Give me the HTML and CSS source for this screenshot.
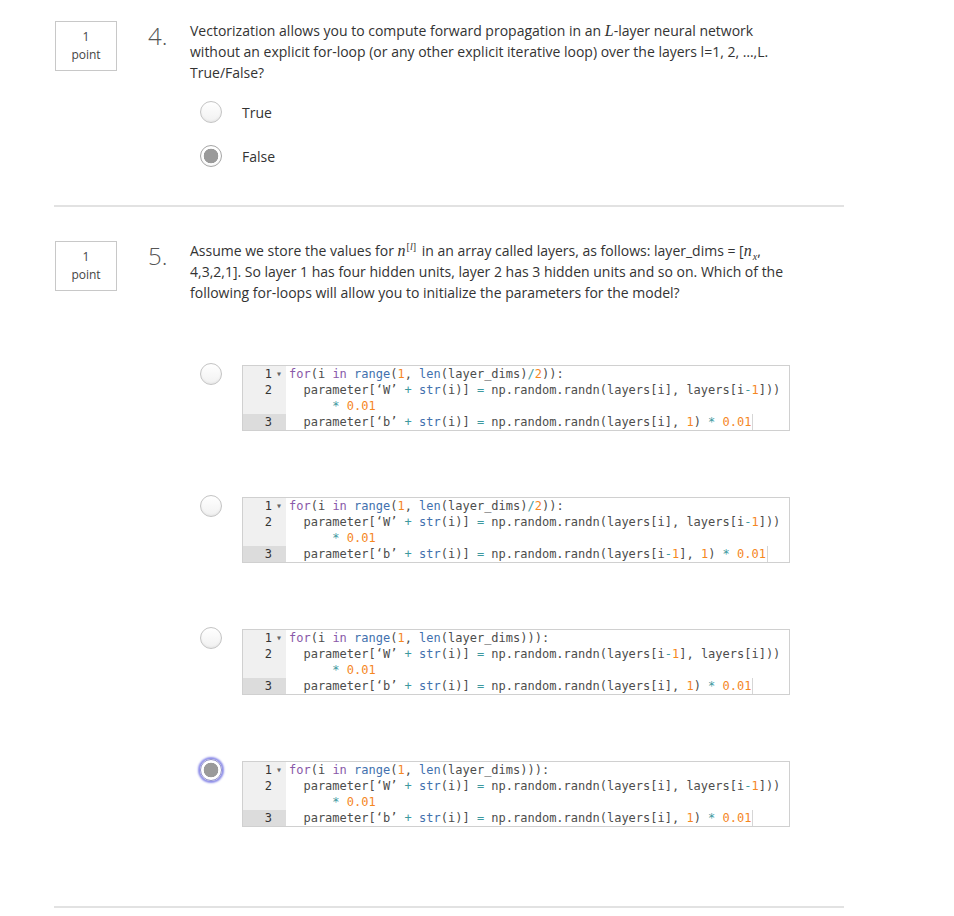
FILE: index.html
```html
<!DOCTYPE html>
<html>
<head>
<meta charset="utf-8">
<link rel="stylesheet" href="styles.css">
</head>
<body>
<div class="page">
  <section class="question q4">
    <div class="points"><div>1</div><div>point</div></div>
    <div class="qnum">4.</div>
    <div class="qbody">
      <div class="prompt">Vectorization allows you to compute forward propagation in an <span class="math">L</span>-layer neural network without an explicit for-loop (or any other explicit iterative loop) over the layers l=1, 2, …,L. True/False?</div>
      <div class="text-options">
        <div class="opt"><span class="radio"></span><span class="opt-label">True</span></div>
        <div class="opt"><span class="radio checked"></span><span class="opt-label">False</span></div>
      </div>
    </div>
  </section>
  <div class="sep"></div>
  <section class="question q5">
    <div class="points"><div>1</div><div>point</div></div>
    <div class="qnum">5.</div>
    <div class="qbody">
      <div class="prompt">Assume we store the values for <span class="math">n<sup>[<i>l</i>]</sup></span> in an array called layers, as follows: layer_dims = [<span class="math">n<sub>x</sub></span>, 4,3,2,1]. So layer 1 has four hidden units, layer 2 has 3 hidden units and so on. Which of the following for-loops will allow you to initialize the parameters for the model?</div>
      <div class="code-options">

        <div class="code-opt">
          <span class="radio"></span>
          <div class="code">
            <div class="row"><div class="gut">1<span class="fold">▾</span></div><div class="src"><div><span class="kw">for</span>(i <span class="kw">in</span> <span class="bi">range</span>(<span class="nm">1</span>, <span class="bi">len</span>(layer_dims)<span class="op">/</span><span class="nm">2</span>)):</div></div></div>
            <div class="row"><div class="gut">2<span class="fold"></span></div><div class="src"><div>  parameter[‘W’ <span class="op">+</span> <span class="bi">str</span>(i)] <span class="op">=</span> np.random.randn(layers[i], layers[i<span class="op">-</span><span class="nm">1</span>]))</div><div class="wrap"><span class="op">*</span> <span class="nm">0.01</span></div></div></div>
            <div class="row active"><div class="gut">3<span class="fold"></span></div><div class="src"><div>  parameter[‘b’ <span class="op">+</span> <span class="bi">str</span>(i)] <span class="op">=</span> np.random.randn(layers[i], <span class="nm">1</span>) <span class="op">*</span> <span class="nm">0.01</span><span class="cursor"></span></div></div></div>
          </div>
        </div>

        <div class="code-opt">
          <span class="radio"></span>
          <div class="code">
            <div class="row"><div class="gut">1<span class="fold">▾</span></div><div class="src"><div><span class="kw">for</span>(i <span class="kw">in</span> <span class="bi">range</span>(<span class="nm">1</span>, <span class="bi">len</span>(layer_dims)<span class="op">/</span><span class="nm">2</span>)):</div></div></div>
            <div class="row"><div class="gut">2<span class="fold"></span></div><div class="src"><div>  parameter[‘W’ <span class="op">+</span> <span class="bi">str</span>(i)] <span class="op">=</span> np.random.randn(layers[i], layers[i<span class="op">-</span><span class="nm">1</span>]))</div><div class="wrap"><span class="op">*</span> <span class="nm">0.01</span></div></div></div>
            <div class="row active"><div class="gut">3<span class="fold"></span></div><div class="src"><div>  parameter[‘b’ <span class="op">+</span> <span class="bi">str</span>(i)] <span class="op">=</span> np.random.randn(layers[i<span class="op">-</span><span class="nm">1</span>], <span class="nm">1</span>) <span class="op">*</span> <span class="nm">0.01</span><span class="cursor"></span></div></div></div>
          </div>
        </div>

        <div class="code-opt">
          <span class="radio"></span>
          <div class="code">
            <div class="row"><div class="gut">1<span class="fold">▾</span></div><div class="src"><div><span class="kw">for</span>(i <span class="kw">in</span> <span class="bi">range</span>(<span class="nm">1</span>, <span class="bi">len</span>(layer_dims))):</div></div></div>
            <div class="row"><div class="gut">2<span class="fold"></span></div><div class="src"><div>  parameter[‘W’ <span class="op">+</span> <span class="bi">str</span>(i)] <span class="op">=</span> np.random.randn(layers[i<span class="op">-</span><span class="nm">1</span>], layers[i]))</div><div class="wrap"><span class="op">*</span> <span class="nm">0.01</span></div></div></div>
            <div class="row active"><div class="gut">3<span class="fold"></span></div><div class="src"><div>  parameter[‘b’ <span class="op">+</span> <span class="bi">str</span>(i)] <span class="op">=</span> np.random.randn(layers[i], <span class="nm">1</span>) <span class="op">*</span> <span class="nm">0.01</span><span class="cursor"></span></div></div></div>
          </div>
        </div>

        <div class="code-opt">
          <span class="radio checked focused"></span>
          <div class="code">
            <div class="row"><div class="gut">1<span class="fold">▾</span></div><div class="src"><div><span class="kw">for</span>(i <span class="kw">in</span> <span class="bi">range</span>(<span class="nm">1</span>, <span class="bi">len</span>(layer_dims))):</div></div></div>
            <div class="row"><div class="gut">2<span class="fold"></span></div><div class="src"><div>  parameter[‘W’ <span class="op">+</span> <span class="bi">str</span>(i)] <span class="op">=</span> np.random.randn(layers[i], layers[i<span class="op">-</span><span class="nm">1</span>]))</div><div class="wrap"><span class="op">*</span> <span class="nm">0.01</span></div></div></div>
            <div class="row active"><div class="gut">3<span class="fold"></span></div><div class="src"><div>  parameter[‘b’ <span class="op">+</span> <span class="bi">str</span>(i)] <span class="op">=</span> np.random.randn(layers[i], <span class="nm">1</span>) <span class="op">*</span> <span class="nm">0.01</span><span class="cursor"></span></div></div></div>
          </div>
        </div>

      </div>
    </div>
  </section>
  <div class="sep"></div>
</div>
</body>
</html>
```

FILE: styles.css
```css
html, body {
  margin: 0;
  padding: 0;
  background: #fff;
}
body {
  font-family: "Open Sans", "Liberation Sans", sans-serif;
  color: #333;
  font-size: 14px;
}
.page {
  padding: 21px 0 0 54px;
}
.question {
  display: flex;
  align-items: flex-start;
}
.points {
  box-sizing: border-box;
  width: 62px;
  height: 50px;
  margin-left: 1px;
  border: 1px solid #c8c8c8;
  display: flex;
  flex-direction: column;
  justify-content: center;
  align-items: center;
  font-size: 12px;
  line-height: 18px;
  color: #444;
}
.qnum {
  width: 42px;
  margin-left: 31px;
  font-size: 24px;
  font-weight: 300;
  line-height: 30px;
  color: #555;
}
.qbody {
  width: 605px;
}
.prompt {
  line-height: 21px;
  margin-top: -1px;
}
.math {
  font-family: "Liberation Serif", "DejaVu Serif", serif;
  font-style: italic;
  font-size: 16px;
}
.math sup, .math sub {
  font-size: 10px;
  line-height: 0;
}
.math sup i, .math sub {
  font-style: italic;
}
.math sup {
  font-style: normal;
  vertical-align: 6px;
  margin-left: 1px;
  margin-right: 2px;
}
.math sub {
  margin-left: 1px;
}
.text-options {
  margin-top: 7px;
}
.opt {
  display: flex;
  align-items: center;
  height: 44px;
  padding-left: 10px;
}
.opt-label {
  margin-left: 20px;
}
.radio {
  box-sizing: border-box;
  display: inline-block;
  flex: none;
  width: 22px;
  height: 22px;
  border-radius: 50%;
  border: 1px solid #c4c4c4;
  background: linear-gradient(#ffffff, #f1f1f1);
  box-shadow: inset 0 -1px 2px rgba(0,0,0,0.05);
}
.radio.checked {
  border: 1px solid #a6a6a6;
  background: radial-gradient(circle, #9a9a9a 0, #9a9a9a 7px, #ffffff 7.6px, #ffffff 100%);
}
.radio.focused {
  box-shadow: 0 0 2px 2px #8c8ce8;
  border-color: #9090c8;
}
.sep {
  width: 790px;
  height: 2px;
  background: #e2e2e2;
}
.q4 + .sep {
  margin-top: 27px;
}
.q5 {
  margin-top: 34px;
}
.code-options {
  margin-top: 60px;
  padding-left: 10px;
  display: flex;
  flex-direction: column;
  gap: 64px;
}
.code-opt {
  display: flex;
  align-items: flex-start;
}
.code {
  margin-top: 2px;
  margin-left: 20px;
  box-sizing: border-box;
  width: 548px;
  border: 1px solid #d0d0d0;
  font-family: "DejaVu Sans Mono", "Liberation Mono", monospace;
  font-size: 12px;
  line-height: 16px;
  color: #4d4d4c;
  background: #fff;
}
.row {
  display: flex;
}
.gut {
  width: 43px;
  flex: none;
  background: #f0f0f0;
  color: #333;
  box-sizing: border-box;
  display: flex;
  justify-content: flex-end;
}
.row.active .gut {
  background: #dcdcdc;
}
.fold {
  display: inline-block;
  width: 14px;
  text-align: center;
  font-size: 10px;
  color: #666;
}
.src {
  padding-left: 3px;
  white-space: pre;
}
.wrap {
  padding-left: 6ch;
}
.kw { color: #8959a8; }
.bi { color: #4271ae; }
.nm { color: #f5871f; }
.op { color: #3e999f; }
.cursor {
  display: inline-block;
  width: 0;
  height: 16px;
  vertical-align: top;
  border-left: 1px solid #d6d6d6;
  margin-left: 1px;
}
.q5 + .sep {
  margin-top: 79px;
}
```
